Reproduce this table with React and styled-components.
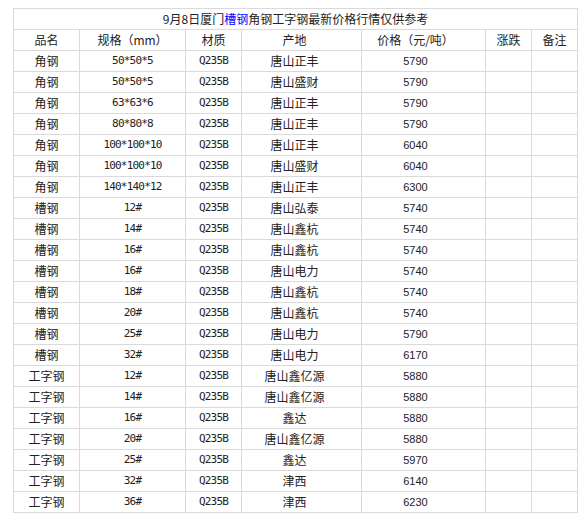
import React from 'react';
import styled, { createGlobalStyle } from 'styled-components';

const GlobalStyle = createGlobalStyle`
  html, body {
    margin: 0;
    padding: 0;
    background: #fff;
  }
  body {
    font-family: "Noto Sans CJK SC", sans-serif;
    color: #333;
  }
`;

const rows = [
  ['角钢', '50*50*5', '唐山正丰', '5790'],
  ['角钢', '50*50*5', '唐山盛财', '5790'],
  ['角钢', '63*63*6', '唐山正丰', '5790'],
  ['角钢', '80*80*8', '唐山正丰', '5790'],
  ['角钢', '100*100*10', '唐山正丰', '6040'],
  ['角钢', '100*100*10', '唐山盛财', '6040'],
  ['角钢', '140*140*12', '唐山正丰', '6300'],
  ['槽钢', '12#', '唐山弘泰', '5740'],
  ['槽钢', '14#', '唐山鑫杭', '5740'],
  ['槽钢', '16#', '唐山鑫杭', '5740'],
  ['槽钢', '16#', '唐山电力', '5740'],
  ['槽钢', '18#', '唐山鑫杭', '5740'],
  ['槽钢', '20#', '唐山鑫杭', '5740'],
  ['槽钢', '25#', '唐山电力', '5790'],
  ['槽钢', '32#', '唐山电力', '6170'],
  ['工字钢', '12#', '唐山鑫亿源', '5880'],
  ['工字钢', '14#', '唐山鑫亿源', '5880'],
  ['工字钢', '16#', '鑫达', '5880'],
  ['工字钢', '20#', '唐山鑫亿源', '5880'],
  ['工字钢', '25#', '鑫达', '5970'],
  ['工字钢', '32#', '津西', '6140'],
  ['工字钢', '36#', '津西', '6230'],
];

const widths = [66, 106, 56, 120, 124, 46, 46];

export default function App() {
  return (
    <>
      <GlobalStyle />
      <Page>
        <PriceTable>
          <colgroup>
            {widths.map((w, i) => <col key={i} style={{ width: w }} />)}
          </colgroup>
          <tbody>
            <tr>
              <Cell colSpan={7}>
                9月8日厦门<Link href="#">槽钢</Link>角钢工字钢最新价格行情仅供参考
              </Cell>
            </tr>
            <tr>
              <Cell>品名</Cell>
              <Cell>规格（mm）</Cell>
              <Cell>材质</Cell>
              <Cell $shift={14}>产地</Cell>
              <Cell $shift={16}>价格（元/吨）</Cell>
              <Cell>涨跌</Cell>
              <Cell>备注</Cell>
            </tr>
            {rows.map((r, i) => (
              <tr key={i}>
                <Cell>{r[0]}</Cell>
                <Cell $mono>{r[1]}</Cell>
                <Cell $mono>Q235B</Cell>
                <Cell $shift={14}>{r[2]}</Cell>
                <Cell $num $shift={16}>{r[3]}</Cell>
                <Cell />
                <Cell />
              </tr>
            ))}
          </tbody>
        </PriceTable>
      </Page>
    </>
  );
}

const Page = styled.div`
  padding: 8px 0 0 13px;
`;

const PriceTable = styled.table`
  width: 565px;
  table-layout: fixed;
  border-collapse: collapse;
  border: 1px solid #dadada;
`;

const Cell = styled.td`
  height: 20px;
  padding: 0 ${p => p.$shift || 0}px 0 0;
  border: 1px solid #dadada;
  text-align: center;
  vertical-align: middle;
  white-space: nowrap;
  overflow: hidden;
  line-height: 20px;
  font-size: ${p => (p.$mono || p.$num ? '11px' : '12px')};
  letter-spacing: ${p => (p.$mono ? '-0.8px' : '0')};
  font-family: ${p =>
    p.$mono
      ? '"DejaVu Sans Mono", monospace'
      : p.$num
      ? '"Liberation Sans", Arial, sans-serif'
      : '"Noto Sans CJK SC", sans-serif'};
  color: #222;
`;

const Link = styled.a`
  color: #0000ff;
  text-decoration: none;
`;
